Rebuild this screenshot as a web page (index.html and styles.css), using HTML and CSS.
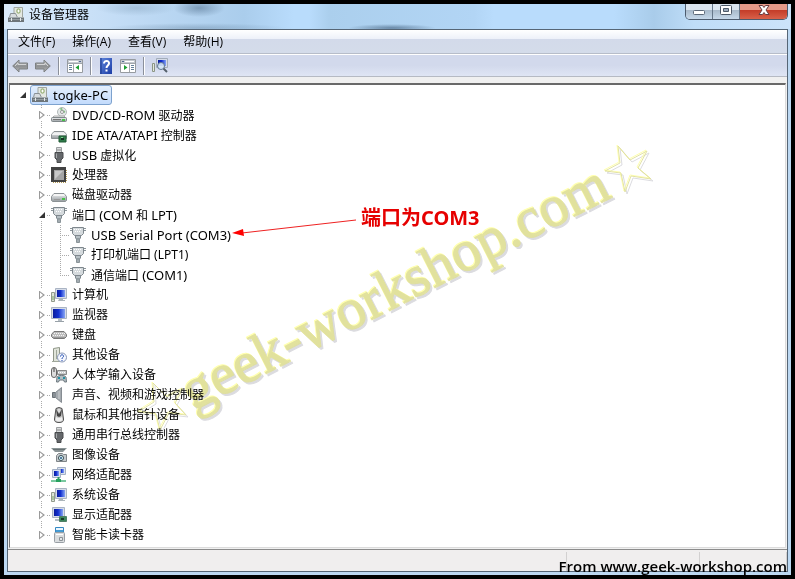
FILE: index.html
```html
<!DOCTYPE html>
<html lang="zh-CN">
<head>
<meta charset="utf-8">
<title>设备管理器</title>
<link rel="stylesheet" href="styles.css">
</head>
<body>
<svg class="defs" aria-hidden="true">
  <defs>
    <linearGradient id="gm" x1="0" y1="0" x2="0" y2="1"><stop offset="0" stop-color="#f4f5f6"/><stop offset="1" stop-color="#959b9f"/></linearGradient>
    <linearGradient id="gs" x1="0" y1="0" x2="1" y2="0"><stop offset="0" stop-color="#0a1c9c"/><stop offset=".45" stop-color="#1230d0"/><stop offset="1" stop-color="#86a4f4"/></linearGradient>
    <linearGradient id="ga" x1="0" y1="0" x2="0" y2="1"><stop offset="0" stop-color="#c8c8c8"/><stop offset=".5" stop-color="#8d8f91"/><stop offset="1" stop-color="#b5b5b5"/></linearGradient>
    <linearGradient id="gq" x1="0" y1="0" x2="1" y2="1"><stop offset="0" stop-color="#5f86dc"/><stop offset="1" stop-color="#1c3da6"/></linearGradient>
  </defs>
  <symbol id="pc" viewBox="0 0 16 16"><path d="M6 .5h8.500v10H6z" fill="#e4e8e2" stroke="#a0a6a0"/><rect x="9" y="2" width="3" height="4" rx="1" fill="#fff" stroke="#83a05a"/><path d="M2.500 6.500h5l2 4h-8z" fill="#d7dcdf" stroke="#899095"/><path d="M0 10h16v2H0z" fill="#a5acb0"/><path d="M0 11h16v4H0z" fill="#6d757a"/><path d="M1 12.500h14" stroke="#959da1"/><path d="M3.500 11v3M12.500 11v3" stroke="#e6eaec"/></symbol>
  <symbol id="dvd" viewBox="0 0 16 16"><circle cx="11" cy="5" r="4.500" fill="#e4e8e8" stroke="#b2b8b8"/><path d="M10 1l1 3 3 1" stroke="#86c286" fill="none" stroke-width="2"/><circle cx="11" cy="5" r="1.500" fill="#fff" stroke="#999"/><path d="M3 9h10l2 2H1z" fill="#e8eaea" stroke="#aaa"/><rect x=".5" y="10.500" width="15" height="4" rx="1" fill="url(#gm)" stroke="#81888b"/><path d="M2 12.500h8" stroke="#777"/><path d="M11 12h3v2h-3z" fill="#48c24a"/></symbol>
  <symbol id="ide" viewBox="0 0 16 16"><path d="M3 4.500h10l2.500 3v4H.5v-4z" fill="url(#gm)" stroke="#8a9093"/><path d="M2 6h12l1 2H1z" fill="#f0f1f2"/><path d="M8 9h7v6H8z" fill="#2e7a48" stroke="#205a35"/><path d="M10 11h3v2h-3z" fill="#142f22"/><path d="M10 10h2v1h-2z" fill="#7fd08f"/></symbol>
  <symbol id="usb" viewBox="0 0 16 16"><path d="M5.500.5h5V6h-5z" fill="#dadcdd" stroke="#9a9d9f"/><path d="M7 2v2M9 2v2" stroke="#888"/><path d="M4 5.500h8V11l-2 2v2.500H6V13l-2-2z" fill="#64676a" stroke="#4a4c4e"/><path d="M5.500 6.500V11" stroke="#a5a8aa"/></symbol>
  <symbol id="cpu" viewBox="0 0 16 16"><path d="M2 2h13v13H2z" fill="none" stroke="#b49a55" stroke-width="2" stroke-dasharray="1 1"/><path d="M0 0h15v15H0z" fill="#424242"/><path d="M3 3h10v10H3z" fill="#a5a5a5"/><path d="M4 4h8L4 12z" fill="#c8c8c8"/></symbol>
  <symbol id="disk" viewBox="0 0 16 16"><path d="M3 6.500h10l2.500 3v4l-1 1h-13l-1-1v-4z" fill="url(#gm)" stroke="#8c9295"/><path d="M3 7h10l1 2H2z" fill="#f5f5f5"/><path d="M3 12.500h6" stroke="#999"/><path d="M11 11h3v2h-3z" fill="#48c248"/></symbol>
  <symbol id="port" viewBox="0 0 16 16"><path d="M0 1.500h16M0 3.500h16" stroke="#8c959a"/><path d="M2.500.5h11v6l-2 2h-7l-2-2z" fill="#d5dadd" stroke="#7e878d"/><path d="M4 2.500h8M5 4.500h6" stroke="#fff" stroke-dasharray="1 1"/><path d="M5.500 8.500h5V11l-1 1h-3l-1-1z" fill="#b6bfc4" stroke="#7e878d"/><path d="M6.500 12h3v3.500h-3z" fill="#a3acb1" stroke="#8a9499"/></symbol>
  <symbol id="mon" viewBox="0 0 16 16"><path d="M.5.5h15v11H.5z" fill="#d6dce8" stroke="#aab4c4"/><path d="M2 2h12v9H2z" fill="url(#gs)"/><path d="M7 12h4v2H7z" fill="#b5bdc4"/><path d="M4 14.500h9" stroke="#98a1a8"/></symbol>
  <symbol id="comp" viewBox="0 0 16 16"><path d="M4.500 1.500h11v10h-11z" fill="#d6dce8" stroke="#aab4c4"/><path d="M6 3h8v7H6z" fill="url(#gs)"/><path d="M8 12h4v1h2v1H7z" fill="#acb5ba"/><path d="M.5 5.500h3v9h-3z" fill="#dce4d8" stroke="#929b8d"/><path d="M2 9v4" stroke="#78a365"/></symbol>
  <symbol id="key" viewBox="0 0 16 16"><path d="M3 4.500h10l2.500 3v2l-2 2h-11l-2-2v-2z" fill="#bdbdbd" stroke="#777"/><path d="M3 6.500h11M2 8.500h12" stroke="#f4f4f4" stroke-dasharray="1 1"/><path d="M2 10.500h12" stroke="#999"/></symbol>
  <symbol id="other" viewBox="0 0 16 16"><path d="M2.500 1.500l6-1v14h-6z" fill="#e0e4da" stroke="#8f9688"/><path d="M5.500 3v9M1 14.500h8" stroke="#a0a79b"/><circle cx="11" cy="10.500" r="4.500" fill="#f4f7ff" stroke="#8795b4"/><path d="M9.500 9.500c0-2.500 3.500-2 3 0-.3 1-1.500 1-1.500 2.500M11 13v1" stroke="#204bb0" fill="none"/></symbol>
  <symbol id="hid" viewBox="0 0 16 16"><rect x=".5" y=".5" width="5" height="10" rx="2.500" fill="#ddd" stroke="#666"/><path d="M3 1v4" stroke="#444"/><path d="M6.500 3.500h9v4h-9z" fill="#c9cccd" stroke="#888"/><path d="M7 5.500h8" stroke="#fff" stroke-dasharray="1 1"/><path d="M6 10c1-2 8-2 9 0l.5 5h-2l-1-2h-4l-1 2h-2z" fill="#b4bfc5" stroke="#6c777d"/><path d="M7 11h2M12 11h2" stroke="#2690a2" stroke-width="2"/></symbol>
  <symbol id="sound" viewBox="0 0 16 16"><path d="M1.500 5.500h3v5h-3z" fill="#899096" stroke="#697076"/><path d="M4.500 5.500l6-5v15l-6-5z" fill="#a4aaaf" stroke="#868c92"/><path d="M8 4v8" stroke="#d0d2d4"/></symbol>
  <symbol id="mouse" viewBox="0 0 16 16"><path d="M5 1.500Q8-.5 11 1.500L12.500 12Q13 15.500 8 15.500T3.500 12z" fill="#c6c6c6" stroke="#505050"/><path d="M5 2l3 5 3-5-1 7-2 1-2-1z" fill="#444"/><path d="M7 2h2v3H7z" fill="#ddd"/><path d="M5 10q3 2 6 0l.5 3q-3.500 3-7 0z" fill="#efefef"/></symbol>
  <symbol id="cam" viewBox="0 0 16 16"><path d="M0 1h16l-4 4H4z" fill="#8a9496"/><path d="M2 2.500h12" stroke="#677173"/><path d="M5.500 8.500l2-2h4l1 1h3v7h-10z" fill="#c3c8cb" stroke="#7f8588"/><circle cx="10" cy="11" r="2.500" fill="#dff" stroke="#37464f"/><circle cx="10" cy="11" r="1" fill="#244d80"/></symbol>
  <symbol id="net" viewBox="0 0 16 16"><path d="M6.500.5h8v7h-8z" fill="#d9e1ee" stroke="#a4b1c5"/><path d="M8 2h5v4H8z" fill="url(#gs)"/><path d="M1.500 2.500h8v8h-8z" fill="#d9e1ee" stroke="#a4b1c5"/><path d="M3 4h5v5H3z" fill="url(#gs)"/><path d="M7.500 10v3" stroke="#359c65" stroke-width="2"/><path d="M0 14h15" stroke="#7ac8a0" stroke-width="2"/><path d="M5 12h5v3H5z" fill="#27a15e"/></symbol>
  <symbol id="disp" viewBox="0 0 16 16"><path d="M1.500.5h12v10h-12z" fill="#d6dce8" stroke="#aab4c4"/><path d="M3 2h9v7H3z" fill="url(#gs)"/><path d="M4 13h5" stroke="#b4bec6" stroke-width="2"/><path d="M8.500 9.500h7v5h-7z" fill="#3d875d" stroke="#507f66"/><path d="M10 11h3v2h-3z" fill="#163c25"/></symbol>
  <symbol id="card" viewBox="0 0 16 16"><path d="M4.500.5h8v5h-8z" fill="#eaf6ff" stroke="#3588c3"/><path d="M5 4h7" stroke="#469bd3" stroke-width="2"/><rect x="3.500" y="5.500" width="10" height="10" rx="1" fill="#dadddf" stroke="#999fa5"/><path d="M5 7.500h7" stroke="#fff"/><path d="M8.500 10.500h3v3h-3z" fill="#e5eaed" stroke="#8c9296"/></symbol>
  <symbol id="arrow" viewBox="0 0 16 16"><path d="M.7 8L7 2v3h8.500v6H7v3z" fill="url(#ga)" stroke="#7d8082"/><path d="M3 8l3-3v1.500h8" fill="none" stroke="#d3d4d5"/></symbol>
  <symbol id="pane" viewBox="0 0 16 14"><path d="M.5.5h15v13H.5z" fill="#fff" stroke="#969ba0"/><path d="M1 1h14v3H1z" fill="#c5cad1"/><path d="M2 2.500h9" stroke="#fff"/><path d="M12 2.500h2" stroke="#536a8f"/><path d="M6.500 4v9M1 4.500h14" stroke="#a0a6ab"/><path d="M2 6.500h3M2 8.500h3M2 10.500h3" stroke="#66829b"/><path d="M12 6v5L8.500 8.500z" fill="#1c9e32"/></symbol>
</svg>
<main class="window">
  <header class="title-bar">
    <svg class="icon"><use href="#pc"/></svg>
    <h1>设备管理器</h1>
    <div class="window-buttons">
      <button aria-label="最小化"><svg viewBox="0 0 14 14"><rect x="1.500" y="6.500" width="11" height="4" rx="1" fill="#fff" stroke="#5c6878"/></svg></button>
      <button aria-label="最大化"><svg viewBox="0 0 14 14"><rect x="1.500" y="1.500" width="11" height="9" rx="1" fill="#fff" stroke="#4e5a69"/><path d="M4.500 4.500h5v3h-5z" fill="#9baabb" stroke="#4e5a69"/></svg></button>
      <button class="close" aria-label="关闭"><svg viewBox="0 0 14 14"><path d="M2 1.500h3.500L7 3.500l1.500-2H12L9 6l3 4.500H8.500L7 8.500l-1.500 2H2L5 6z" fill="#fff" stroke="#6a3c40"/></svg></button>
    </div>
  </header>
  <div class="client">
    <nav class="menu"><button>文件(F)</button><button>操作(A)</button><button>查看(V)</button><button>帮助(H)</button></nav>
    <div class="toolbar">
      <button aria-label="后退"><svg class="icon"><use href="#arrow"/></svg></button>
      <button aria-label="前进"><svg class="icon flip"><use href="#arrow"/></svg></button>
      <i></i>
      <button aria-label="显示控制台树"><svg class="icon"><use href="#pane"/></svg></button>
      <i></i>
      <button class="help" aria-label="帮助"><svg class="icon" viewBox="0 0 16 16"><path d="M2 0h12v16H2z" fill="url(#gq)"/><path d="M3 0v16" stroke="#183587"/><path d="M6 5.500c0-3.500 5.500-3.300 5 0-.3 2-2.500 2-2.500 4.500M8.500 11.500v2" fill="none" stroke="#fff" stroke-width="2"/></svg></button>
      <button aria-label="显示操作窗格"><svg class="icon flip"><use href="#pane"/></svg></button>
      <i></i>
      <button aria-label="扫描检测硬件改动"><svg class="icon" viewBox="0 0 16 16"><path d="M.5 5.500h2v8h-2z" fill="#e4e8dd" stroke="#8b9584"/><path d="M4.500.5h11v9h-11z" fill="#d6dce8" stroke="#a3adba"/><path d="M6 2h8v6H6z" fill="url(#gs)"/><circle cx="9" cy="8" r="3.500" fill="#d7e9fa" fill-opacity=".9" stroke="#62788f"/><path d="M11.500 10.500L15 14" stroke="#55606b" stroke-width="2"/></svg></button>
    </div>
    <section class="tree-pane">
      <div class="row root"><button class="expander open" aria-label="折叠"></button><span class="selected"><svg class="icon"><use href="#pc"/></svg><span class="latin">togke-PC</span></span></div>
      <ul class="tree">
        <li><div class="row"><button class="expander" aria-label="展开"></button><svg class="icon"><use href="#dvd"/></svg><span><span class="latin">DVD/CD-ROM</span> 驱动器</span></div></li>
        <li><div class="row"><button class="expander" aria-label="展开"></button><svg class="icon"><use href="#ide"/></svg><span><span class="latin">IDE ATA/ATAPI</span> 控制器</span></div></li>
        <li><div class="row"><button class="expander" aria-label="展开"></button><svg class="icon"><use href="#usb"/></svg><span><span class="latin">USB</span> 虚拟化</span></div></li>
        <li><div class="row"><button class="expander" aria-label="展开"></button><svg class="icon"><use href="#cpu"/></svg><span>处理器</span></div></li>
        <li><div class="row"><button class="expander" aria-label="展开"></button><svg class="icon"><use href="#disk"/></svg><span>磁盘驱动器</span></div></li>
        <li><div class="row"><button class="expander open" aria-label="折叠"></button><svg class="icon"><use href="#port"/></svg><span>端口 <span class="latin">(COM</span> 和 <span class="latin">LPT)</span></span></div>
          <ul class="ports">
            <li><div class="row"><svg class="icon"><use href="#port"/></svg><span class="latin">USB Serial Port (COM3)</span></div></li>
            <li><div class="row"><svg class="icon"><use href="#port"/></svg><span>打印机端口 (LPT1)</span></div></li>
            <li><div class="row"><svg class="icon"><use href="#port"/></svg><span>通信端口 <span class="latin">(COM1)</span></span></div></li>
          </ul></li>
        <li><div class="row"><button class="expander" aria-label="展开"></button><svg class="icon"><use href="#comp"/></svg><span>计算机</span></div></li>
        <li><div class="row"><button class="expander" aria-label="展开"></button><svg class="icon"><use href="#mon"/></svg><span>监视器</span></div></li>
        <li><div class="row"><button class="expander" aria-label="展开"></button><svg class="icon"><use href="#key"/></svg><span>键盘</span></div></li>
        <li><div class="row"><button class="expander" aria-label="展开"></button><svg class="icon"><use href="#other"/></svg><span>其他设备</span></div></li>
        <li><div class="row"><button class="expander" aria-label="展开"></button><svg class="icon"><use href="#hid"/></svg><span>人体学输入设备</span></div></li>
        <li><div class="row"><button class="expander" aria-label="展开"></button><svg class="icon"><use href="#sound"/></svg><span>声音、视频和游戏控制器</span></div></li>
        <li><div class="row"><button class="expander" aria-label="展开"></button><svg class="icon"><use href="#mouse"/></svg><span>鼠标和其他指针设备</span></div></li>
        <li><div class="row"><button class="expander" aria-label="展开"></button><svg class="icon"><use href="#usb"/></svg><span>通用串行总线控制器</span></div></li>
        <li><div class="row"><button class="expander" aria-label="展开"></button><svg class="icon"><use href="#cam"/></svg><span>图像设备</span></div></li>
        <li><div class="row"><button class="expander" aria-label="展开"></button><svg class="icon"><use href="#net"/></svg><span>网络适配器</span></div></li>
        <li><div class="row"><button class="expander" aria-label="展开"></button><svg class="icon"><use href="#comp"/></svg><span>系统设备</span></div></li>
        <li><div class="row"><button class="expander" aria-label="展开"></button><svg class="icon"><use href="#disp"/></svg><span>显示适配器</span></div></li>
        <li><div class="row"><button class="expander" aria-label="展开"></button><svg class="icon"><use href="#card"/></svg><span>智能卡读卡器</span></div></li>
      </ul>
    </section>
    <footer class="status-bar"><span></span><span></span><span></span></footer>
  </div>
</main>
<svg class="overlay" viewBox="0 0 795 579" width="795" height="579">
  <defs>
    <g id="mark">
      <text transform="translate(193 411) rotate(-27)">geek-workshop.com</text>
      <path class="star" d="M618 146L630 160L647 151L638 168L651 179L631 176L625 192L621 173L605 171L620 163Z"/>
      <path class="star" d="M153 383L167 397L183 389L175 403L186 415L169 413L160 430L156 414L138 412L154 402Z"/>
    </g>
  </defs>
  <use href="#mark" class="mark-shade" x="2" y="2"/>
  <use href="#mark" class="mark-light" x="-1" y="-1"/>
  <use href="#mark" class="mark-face"/>
  <path d="M356 220L242 233" stroke="#e22" fill="none"/>
  <path d="M232 233L243 229L244 236Z" fill="#f00"/>
  <text class="note" x="361" y="225">端口为COM3</text>
</svg>
<p class="credit">From www.geek-workshop.com</p>
</body>
</html>
```
FILE: styles.css
```css
* { box-sizing: border-box; }
body {
  position: relative;
  margin: 0;
  min-height: 100vh;
  padding: 4px;
  background: #000;
  color: #000;
  font: 12px/20px "Noto Sans", "Noto Sans CJK SC", sans-serif;
}
button {
  margin: 0;
  padding: 0;
  border: 0;
  background: none;
  color: inherit;
  font: inherit;
}
ul { margin: 0; padding: 0; list-style: none; }
.defs { position: absolute; width: 0; height: 0; }
.icon { display: block; flex: none; width: 16px; height: 16px; }
.flip { transform: scaleX(-1); }
.latin { font-size: 13px; }
.window {
  display: flex;
  flex-direction: column;
  min-height: calc(100vh - 8px);
  padding: 0 3px 3px;
  background: #bcd8f2;
}
.title-bar {
  display: flex;
  align-items: center;
  height: 25px;
  margin: 0 -3px;
  padding: 0 3px 0 4px;
  background:
    radial-gradient(ellipse 40px 8px at 132px 4px, #6f8ea855, transparent),
    radial-gradient(ellipse 26px 9px at 195px 4px, #3e5c7a77, transparent),
    radial-gradient(ellipse 90px 5px at 193px 24px, #55738f55, transparent),
    radial-gradient(ellipse 44px 4px at 388px 24px, #3b587699, transparent),
    linear-gradient(90deg, #dcebfa, #c4ddf6 110px, #aacdec 240px, #b9dcfc 290px, #b9dcfc 305px, #abcfed 325px, #b2d5f5 470px, #b9dcfc 490px, #b9dcfc 610px, #a9ccea 650px, #bfddf8 690px, #cce3fa);
}
.title-bar h1 { margin: 0 0 3px 5px; font: inherit; }
.title-bar > .icon { margin-bottom: 3px; }
.window-buttons {
  display: flex;
  align-self: flex-start;
  height: 16px;
  margin-left: auto;
  border: 1px solid #4c5b6d;
  border-top: 0;
  border-radius: 0 0 5px 5px;
  overflow: hidden;
}
.window-buttons button {
  display: flex;
  justify-content: center;
  width: 27px;
  border-right: 1px solid #66778a;
  background: linear-gradient(#dbe5ef 40%, #a8b9ca 41%, #c6d8ea);
}
.window-buttons svg { width: 14px; height: 14px; }
.window-buttons .close {
  width: 47px;
  border: 0;
  background: linear-gradient(#e59a89 38%, #c33b27 40%, #d9614a);
}
.client {
  display: flex;
  flex: 1;
  flex-direction: column;
  border: 1px solid #566676;
  background: #f0f0f0;
}
.menu {
  display: flex;
  gap: 17px;
  height: 25px;
  padding: 0 10px;
  border-bottom: 1px solid #fff;
  background: linear-gradient(#fff, #edf1f9 9px, #d3daea 9px, #d4dcea 23px, #b7bdc9 23px);
  font-family: "Open Sans", "Noto Sans CJK SC", sans-serif;
}
.toolbar {
  display: flex;
  align-items: center;
  gap: 7px;
  height: 22px;
  padding: 0 4px;
  border-bottom: 1px solid #b6bac3;
  background: linear-gradient(#d2d9ec 50%, #dfe5f4);
}
.toolbar i { width: 2px; height: 18px; border-left: 1px solid #8b909a; border-right: 1px solid #fff; }
.toolbar .help { margin: 0 -1px; }
.tree-pane {
  flex: 1;
  margin: 6px 1px 1px;
  padding: 0 0 2px;
  border: 1px solid #dcdcdc;
  border-top: 2px solid #696969;
  border-left-color: #777;
  background: #fff;
}
.row { display: flex; align-items: center; height: 20px; white-space: nowrap; }
.row > span:last-child { margin-left: 5px; }
.root { padding-left: 8px; }
.row > .selected:last-child {
  display: flex;
  gap: 5px;
  margin-left: 3px;
  padding: 0 3px 0 1px;
  border: 1px solid #7da2ce;
  border-radius: 3px;
  background: linear-gradient(#e4effc, #c3dbfc);
  line-height: 18px;
}
.selected .icon { margin-top: 1px; }
.expander { position: relative; width: 9px; height: 12px; background: #fff; }
.expander::before {
  content: "";
  display: block;
  width: 6px;
  height: 9px;
  margin-left: 2px;
  background: #9a9a9a;
  clip-path: polygon(evenodd, 0 0, 100% 50%, 0 100%, 0 0, 1px 2px, 1px 7px, 4px 50%, 1px 2px);
}
.expander.open::before {
  width: 6px;
  height: 6px;
  background: #333;
  clip-path: polygon(100% 0, 100% 100%, 0 100%);
}
.tree { margin-left: 31px; }
.tree li {
  background: repeating-linear-gradient(#aaa 0 1px, transparent 1px 2px) 0 0 / 1px 100% no-repeat;
}
.tree li:last-child { background-size: 1px 10px; }
.tree .row { background: repeating-linear-gradient(90deg, #aaa 0 1px, transparent 1px 2px) 0 10px / 10px 1px no-repeat; }
.tree .expander { margin: 0 5px 0 -4px; }
.ports { margin-left: 19px; }
.ports .row { padding-left: 10px; }
.status-bar { display: flex; height: 22px; border-top: 1px solid #8c8c8c; background: #f0eeee; }
.status-bar span { flex: 0 0 133px; margin-top: 2px; border-right: 1px solid #d2d0d0; }
.status-bar span:first-child { flex: 1; }
.status-bar span:last-child { flex-basis: 87px; }
.overlay { position: absolute; left: 0; top: 0; pointer-events: none; mix-blend-mode: multiply; }
.overlay text { font: 58px "Liberation Serif", serif; stroke-width: 1px; }
.overlay .note { font: bold 20px "Noto Sans", "Noto Sans CJK SC", sans-serif; fill: #e60000; }
.star { fill: none; stroke-width: 1px; }
.mark-shade { fill: #b8b8c0; stroke: #b8b8c0; opacity: .5; }
.mark-light { fill: #ffff9c; stroke: #ffff9c; opacity: .8; }
.mark-face { fill: #dfdf9c; stroke: #dfdf9c; opacity: .9; }
.credit {
  position: absolute;
  right: 8px;
  bottom: 3px;
  margin: 0;
  font: 600 15px/20px "Open Sans", sans-serif;
}
```
